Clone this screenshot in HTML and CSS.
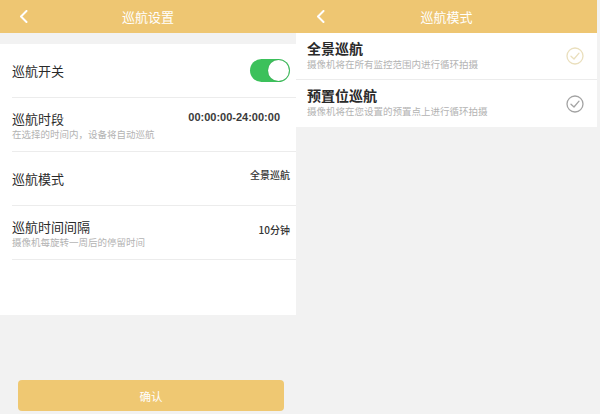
FILE: index.html
```html
<!DOCTYPE html>
<html lang="zh-CN">
<head>
<meta charset="utf-8">
<title>巡航设置</title>
<link rel="stylesheet" href="styles.css">
</head>
<body>
<div class="screen">
  <section class="phone phone-left">
    <header class="topbar">
      <svg class="back" width="9" height="13" viewBox="0 0 9 13"><polyline points="7.5,1 2,6.5 7.5,12" fill="none" stroke="#fff" stroke-width="2" stroke-linecap="round" stroke-linejoin="round"/></svg>
      <span class="title">巡航设置</span>
    </header>
    <div class="card">
      <div class="row row-center">
        <span class="label">巡航开关</span>
        <span class="toggle"><span class="knob"></span></span>
      </div>
      <div class="row">
        <div class="text">
          <div class="label">巡航时段</div>
          <div class="sub">在选择的时间内，设备将自动巡航</div>
        </div>
        <span class="value value-time">00:00:00-24:00:00</span>
      </div>
      <div class="row row-center">
        <span class="label">巡航模式</span>
        <span class="value value-up">全景巡航</span>
      </div>
      <div class="row">
        <div class="text">
          <div class="label">巡航时间间隔</div>
          <div class="sub">摄像机每旋转一周后的停留时间</div>
        </div>
        <span class="value">10分钟</span>
      </div>
    </div>
    <button class="confirm">确认</button>
  </section>
  <section class="phone phone-right">
    <header class="topbar">
      <svg class="back" width="9" height="13" viewBox="0 0 9 13"><polyline points="7.5,1 2,6.5 7.5,12" fill="none" stroke="#fff" stroke-width="2" stroke-linecap="round" stroke-linejoin="round"/></svg>
      <span class="title">巡航模式</span>
    </header>
    <div class="option">
      <div class="text">
        <div class="opt-title">全景巡航</div>
        <div class="sub">摄像机将在所有监控范围内进行循环拍摄</div>
      </div>
      <svg class="check check-on" width="18" height="18" viewBox="0 0 18 18"><circle cx="9" cy="9" r="8" fill="none" stroke="currentColor" stroke-width="1.3"/><polyline points="5,9.2 8,12 13,6.2" fill="none" stroke="currentColor" stroke-width="1.3" stroke-linecap="round" stroke-linejoin="round"/></svg>
    </div>
    <div class="option">
      <div class="text">
        <div class="opt-title">预置位巡航</div>
        <div class="sub">摄像机将在您设置的预置点上进行循环拍摄</div>
      </div>
      <svg class="check check-off" width="18" height="18" viewBox="0 0 18 18"><circle cx="9" cy="9" r="8" fill="none" stroke="currentColor" stroke-width="1.3"/><polyline points="5,9.2 8,12 13,6.2" fill="none" stroke="currentColor" stroke-width="1.3" stroke-linecap="round" stroke-linejoin="round"/></svg>
    </div>
  </section>
</div>
</body>
</html>
```
FILE: styles.css
```css
* { box-sizing: border-box; }
html, body {
  margin: 0;
  padding: 0;
  background: #f2f2f2;
}
body {
  font-family: "Noto Sans CJK SC", "Noto Sans", "Liberation Sans", sans-serif;
  color: #333;
}
.screen {
  width: 600px;
  height: 414px;
  display: flex;
  overflow: hidden;
}
.phone {
  display: flex;
  flex-direction: column;
  height: 414px;
}
.phone-left {
  width: 296px;
}
.phone-right {
  width: 301px;
}
.topbar {
  height: 33px;
  background: #eec672;
  display: flex;
  align-items: center;
  justify-content: center;
  position: relative;
}
.back {
  position: absolute;
  left: 19px;
  top: 10px;
}
.phone-right .back {
  left: 20px;
}
.title {
  color: #fff;
  font-size: 13px;
  line-height: 1;
}
.card {
  margin-top: 11px;
  background: #fff;
  height: 271px;
  display: flex;
  flex-direction: column;
}
.row {
  height: 54px;
  margin-left: 12px;
  padding-right: 6px;
  border-bottom: 1px solid #ececec;
  display: flex;
  align-items: center;
  justify-content: space-between;
}
.row .text {
  display: flex;
  flex-direction: column;
  padding-top: 3px;
}
.label {
  font-size: 13px;
  line-height: 16px;
  color: #2a2a2a;
}
.sub {
  font-size: 9.5px;
  line-height: 13px;
  color: #b3b3b3;
  margin-top: 1px;
}
.value {
  font-size: 10px;
  font-weight: 500;
  color: #333;
  align-self: flex-start;
  margin-top: 16px;
}
.value-time {
  font-size: 11px;
  font-family: "Liberation Sans", "Noto Sans CJK SC", sans-serif;
  font-weight: 700;
  color: #3a3a3a;
  margin-right: 10px;
  margin-top: 13px;
}
.value-up {
  margin-top: 15px;
}
.toggle {
  width: 40px;
  height: 23px;
  border-radius: 12px;
  background: #3cc15b;
  display: flex;
  align-items: center;
  justify-content: flex-end;
  padding-right: 1px;
}
.knob {
  width: 21px;
  height: 21px;
  border-radius: 50%;
  background: #fff;
  box-shadow: 0 0 1px rgba(0,0,0,0.3);
}
.confirm {
  margin: auto 12px 3px 18px;
  height: 31px;
  border: 0;
  border-radius: 4px;
  background: #efc872;
  color: #fff;
  font-family: inherit;
  font-size: 11.5px;
  padding: 0;
}
.option {
  height: 47px;
  background: #fff;
  border-bottom: 1px solid #ececec;
  display: flex;
  align-items: center;
  justify-content: space-between;
  padding-left: 11px;
  padding-right: 13px;
}
.option:last-child {
  border-bottom: 0;
}
.option .text {
  display: flex;
  flex-direction: column;
  padding-bottom: 2px;
}
.opt-title {
  font-size: 14px;
  font-weight: 700;
  line-height: 16px;
  color: #2a2a2a;
}
.option .sub {
  margin-top: 2px;
}
.check {
  display: block;
}
.check-on {
  color: #eadfbd;
}
.check-off {
  color: #a3a3a3;
}
```
